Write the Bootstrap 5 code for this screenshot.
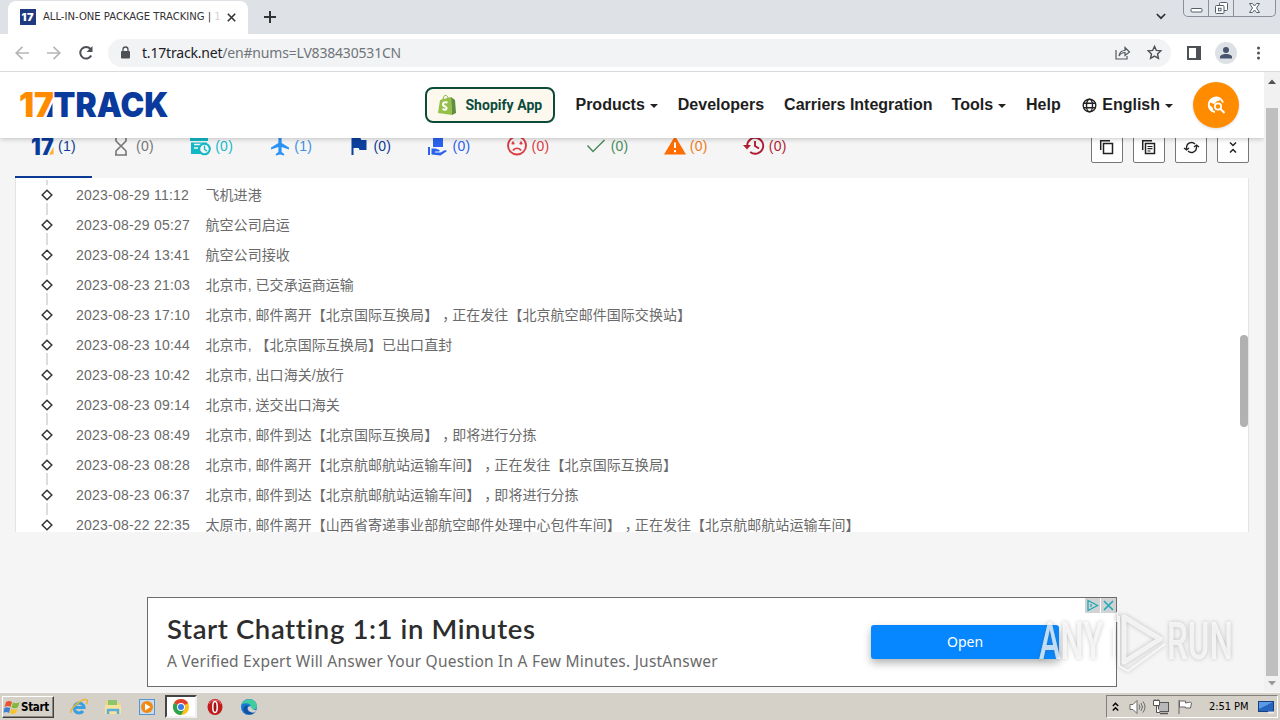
<!DOCTYPE html>
<html lang="en">
<head>
<meta charset="utf-8">
<title>ALL-IN-ONE PACKAGE TRACKING | 17TRACK</title>
<link href="https://cdn.jsdelivr.net/npm/bootstrap@5.3.0/dist/css/bootstrap.min.css" rel="stylesheet">
<style>
html,body{width:1280px;height:720px;overflow:hidden}
body{font-family:"Liberation Sans","Noto Sans CJK SC",sans-serif;font-size:14px;line-height:1;color:#222;background:#f5f5f5}
svg{display:block;flex:none;overflow:visible}
.tabstrip{height:34px;background:#dee1e6;padding-left:8px}
.browser-tab{width:240px;height:33px;margin-top:1px;background:#fff;border-radius:8px 8px 0 0;padding:0 11px 1px 12px}
.tab-title{font:11.2px "DejaVu Sans Condensed","DejaVu Sans",sans-serif;font-stretch:condensed;color:#333;width:180px;margin-left:7px;line-height:16px;letter-spacing:-.01px}
.tab-title i{font-style:normal;color:#d5d5d5}
.toolbar{height:38px;background:#fff;border-bottom:1px solid #d9dadc}
.omni{width:1063px;height:28px;border-radius:14px;background:#f1f3f4;margin-left:15px;padding:0 9px 0 12px}
.url{font:14px "Noto Sans",sans-serif;letter-spacing:-.19px;color:#70757a;line-height:20px}
.url b{font-weight:400;color:#202124}
.winctl{width:93px;height:17px;border:1px solid #8a8f99;border-top:0;border-radius:0 0 5px 5px;margin-right:4px;background:#e1e4ea}
.winctl>span{border-right:1px solid #8a8f99}
.viewer{height:620px}
.site{width:1264px;background:#f5f5f5;overflow:hidden}
.masthead{height:66px;background:#fff;padding:0 25px 0 19px;box-shadow:0 1px 5px rgba(0,0,0,.22);z-index:5}
.menu{font-size:16px;font-weight:700;gap:20px;color:#1e1e1e}
.menu .dd{gap:5px}
.dd::after{content:"";border:4px solid transparent;border-top-color:#222;border-bottom:0;margin-top:1px}
.shop{width:130px;height:36px;border:2px solid #0d4a3a;border-radius:8px;background:#fcf8ee;font:700 14px Roboto,sans-serif;color:#0b4b3c;padding-left:11px;gap:9px;letter-spacing:.03px}
.orb{width:46px;height:46px;border-radius:50%;background:#ff8c00;box-shadow:0 1px 3px rgba(0,0,0,.15)}
.statusbar{height:62px;margin-top:-22px;padding:0 15px}
.st{width:77px;height:62px;margin-right:2.1px;padding:0 0 1px 16px;gap:4px;border-bottom:2px solid transparent;letter-spacing:.25px}
.st.on{border-color:#0b3a94}
.tool{width:32px;height:32px;background:#fff;border:1px solid #777;border-radius:2px}
.events{height:354px;margin:0 15px;width:1234px;background:#fff;border:1px solid #e4e4e4;border-width:0 1px;padding:2px 0 0 26px;overflow:hidden}
.ev{height:30px;color:#6a6a6a;font-size:14px;flex:none}
.ev time{width:129.500px;margin-left:24px;letter-spacing:.22px}
.ev p{margin:0;white-space:nowrap;letter-spacing:.05px}
.comma{display:inline-block;width:14px;padding-left:4px;font-feature-settings:"halt"}
.node{width:10px;height:30px}
.inner-thumb{right:0;top:157px;width:8px;height:92px;border-radius:4px;background:#b1b1b1}
.advert{width:970px;height:90px;margin:65px 0 0 147px;border:1px solid #6c6c6c;background:#fff;padding:0 0 0 19px}
.advert h2{font:600 27.500px Lato,sans-serif;color:#2d2d2d;margin:0;line-height:34px;letter-spacing:.61px}
.advert p{font:15.5px "Noto Sans",sans-serif;color:#6a6a6a;margin:0;line-height:22px;white-space:nowrap;letter-spacing:.22px}
.open{width:188px;height:34px;background:#0787ff;border-radius:3px;color:#fff;font:14px "Noto Sans",sans-serif;box-shadow:0 4px 9px rgba(0,0,0,.3);right:57px;top:27px;padding-bottom:2px}
.adbtns{right:0;top:0;gap:1px}
.adbtns span{width:15px;height:15px;background:#d0d2d4}
.vbar{width:16px;background:#f1f1f1;padding:7px 0 6px}
.vbar i{width:12px;height:568px;background:#bfbfbf;margin-top:24px}
.taskbar{height:28px;background:#d5d0c8;border-top:1px solid #f8f8f6;padding:0 2px;font:11px "DejaVu Sans Condensed","DejaVu Sans",sans-serif;color:#000}
.startb{width:52px;height:22px;border:1px solid;border-color:#fff #404040 #404040 #fff;box-shadow:inset -1px -1px #8c8880;font:700 11.5px "DejaVu Sans Condensed","DejaVu Sans",sans-serif;letter-spacing:-.3px;padding-left:1px}
.quick{gap:16px;margin-left:16px}
.act{width:32px;height:23px;background:#fff;border:2px solid;border-color:#444 #f0f0f0 #f0f0f0 #444;margin:0 -7px}
.tray{width:172px;height:23px;border:1px solid;border-color:#85817a #fff #fff #85817a;padding:0 2px 0 5px}
.wm{left:1030px;top:600px;z-index:9;filter:drop-shadow(0 0 2px rgba(80,80,80,.45))}
</style>
</head>
<body class="d-flex flex-column position-relative">
<div class="tabstrip d-flex align-items-start">
 <div class="browser-tab d-flex align-items-center">
  <svg width="16" height="16"><rect width="16" height="16" fill="#1f3a80"/><text x="1.5" y="12" font-family="Inter" font-weight="900" font-size="11" textLength="12" fill="#fff">17</text></svg>
  <div class="tab-title text-nowrap">ALL-IN-ONE PACKAGE TRACKING | <i>1</i></div>
  <svg width="9" height="9" style="margin-left:4px" stroke="#333" stroke-width="1.6"><path d="M.8.8l7.4 7.4M8.200.8L.8 8.200"/></svg>
 </div>
 <svg width="12" height="12" class="mt-2" style="margin-left:16px;transform:translateY(3px)" stroke="#333" stroke-width="2"><path d="M6 0v12M0 6h12"/></svg>
 <svg width="10" height="7" class="ms-auto" style="margin:13px 17px 0 0" fill="none" stroke="#333" stroke-width="1.7"><path d="M.8 1l4.200 4.200L9.200 1"/></svg>
 <div class="winctl d-flex">
  <span class="d-flex justify-content-center" style="width:25px"><svg width="13" height="16"><rect x="1" y="8.500" width="11" height="3.500" rx="1" fill="#fff" stroke="#555e6c"/></svg></span>
  <span class="d-flex justify-content-center" style="width:25px"><svg width="13" height="16" fill="#fff" stroke="#555e6c"><rect x="4.500" y="2.500" width="8" height="8" rx="1"/><rect x=".5" y="5.500" width="8.500" height="8" rx="1"/><rect x="3.500" y="8.300" width="2.500" height="2.500"/></svg></span>
  <svg class="mx-auto" width="11" height="16" fill="#fff" stroke="#555e6c"><path d="M.5 3.500h3l2 2.500 2-2.500h3L7.500 8l3 4.500h-3l-2-2.500-2 2.500h-3L3.500 8z"/></svg>
 </div>
</div>
<div class="toolbar d-flex align-items-center">
 <svg width="14" height="14" style="margin-left:15px" fill="none" stroke="#b4b6b8" stroke-width="1.700"><path d="M14 7H1M7.500.8L1.200 7l6.300 6.200"/></svg>
 <svg width="14" height="14" style="margin-left:18px" fill="none" stroke="#b4b6b8" stroke-width="1.700"><path d="M0 7h13M6.500.8L12.800 7l-6.300 6.200"/></svg>
 <svg width="14" height="14" style="margin-left:18px" fill="none" stroke="#4d5156" stroke-width="2"><path d="M12.200 9.500A5.800 5.800 0 1 1 11.500 3"/><path d="M13.500 0v6h-6z" fill="#4d5156" stroke="none"/></svg>
 <div class="omni d-flex align-items-center">
  <svg width="11" height="13"><rect x="1" y="5" width="9" height="7.500" rx="1" fill="#4d5156"/><path d="M3 5.500V3.500a2.500 2.500 0 0 1 5 0v2" fill="none" stroke="#4d5156" stroke-width="1.300"/></svg>
  <div class="url" style="margin-left:11px"><b>t.17track.net</b>/en#nums=LV838430531CN</div>
  <svg class="ms-auto" width="15" height="14" fill="none" stroke="#555a60" stroke-width="1.200"><path d="M1 4v9h11v-3M4 10c.5-4 3-5.500 6-5.500V1.500L14.500 6 10 9.500v-3c-3 0-4.500 1-6 3.500z"/></svg>
  <svg style="margin-left:17px" width="15" height="15" viewBox="0 0 16 16" fill="none" stroke="#4d5156" stroke-width="1.500"><path d="M8 1.500l2 4.300 4.700.5-3.500 3.200 1 4.700L8 11.800l-4.200 2.400 1-4.700L1.300 6.300 6 5.800z"/></svg>
 </div>
 <svg style="margin-left:16px" width="14" height="14"><rect x="1" y="1" width="12" height="12" fill="none" stroke="#4d5156" stroke-width="2"/><path d="M9 1h4v12H9z" fill="#4d5156"/></svg>
 <svg style="margin-left:14px" width="22" height="22"><circle cx="11" cy="11" r="11" fill="#dde1e6"/><circle cx="11" cy="8" r="3" fill="#47536f"/><path d="M5 16.500v-1.500c0-4 12-4 12 0v1.500z" fill="#47536f"/></svg>
 <svg style="margin-left:20px" width="4" height="14" fill="#4d5156"><circle cx="1.500" cy="2" r="1.500"/><circle cx="1.500" cy="7" r="1.500"/><circle cx="1.500" cy="12" r="1.500"/></svg>
</div>
<main class="viewer d-flex">
 <div class="site">
  <header class="masthead d-flex align-items-center position-relative">
   <svg width="150" height="26" font-family="Inter" font-weight="900" font-size="33.500">
    <text x="0" y="25" fill="#ff8c00" textLength="35" lengthAdjust="spacingAndGlyphs">17</text>
    <text x="34.500" y="25" fill="#0a3b9c" textLength="115" lengthAdjust="spacingAndGlyphs">TRACK</text>
    <path d="M33.500 11v14h-6z" fill="#0a3b9c"/>
   </svg>
   <nav class="menu d-flex align-items-center ms-auto">
    <div class="shop d-flex align-items-center">
     <svg width="18" height="20"><path d="M2 5l11-3 1 18-14-2z" fill="#95bf47"/><path d="M13 2l4 3 1 13-4 2z" fill="#5e8e3e"/><path d="M5 5c0-6 5-6 5-1" fill="none" stroke="#7fae3b"/><path d="M9.500 7.500C4 6 4 10.500 7 11.500c3 1 1.500 4.500-2.500 2.500" fill="none" stroke="#fff" stroke-width="2"/></svg>
     <span>Shopify App</span>
    </div>
    <span class="dd d-flex align-items-center">Products</span>
    <span>Developers</span>
    <span style="margin-right:-1px">Carriers Integration</span>
    <span class="dd d-flex align-items-center">Tools</span>
    <span style="margin-right:1.500px">Help</span>
    <span class="dd d-flex align-items-center">
     <svg width="15" height="15" fill="none" stroke="#222" stroke-width="1.400"><circle cx="7.500" cy="7.500" r="6.300"/><ellipse cx="7.500" cy="7.500" rx="3" ry="6.300"/><path d="M1.500 5.200h12M1.500 9.800h12"/></svg>English</span>
    <div class="orb d-flex align-items-center justify-content-center">
     <svg width="20" height="20" fill="none" stroke="#fff"><path d="M17 7.500A7.300 7.300 0 1 0 9 17" stroke-width="1.900"/><path d="M9 2.500c5 .5 6 3 3.500 3.500C9.500 6 10 8 8 9L3 7C4 4 6 2.500 9 2.500zM2.500 9L7 13v4c-3-1-5-4-4.500-8z" fill="#fff" stroke="none"/><circle cx="12" cy="11.500" r="3.200" stroke-width="1.700"/><path d="M14.500 14l4 4" stroke-width="2"/></svg>
    </div>
   </nav>
  </header>
  <div class="statusbar d-flex align-items-center">
   <div class="st on d-flex align-items-center" style="color:#0b3a94"><svg width="23" height="20"><text y="18.500" font-family="Inter" font-weight="900" font-size="24" textLength="23" lengthAdjust="spacingAndGlyphs" fill="#0a3b9c">17</text><path d="M22.500 11v7.500h-4.500z" fill="#ffb02e"/></svg>(1)</div>
   <div class="st d-flex align-items-center" style="color:#777"><svg width="22" height="20" fill="none" stroke="#777" stroke-width="1.600"><path d="M5 1h12M5 19h12M6 1v4l5 5 5-5V1M6 19v-4l5-5 5 5v4"/></svg>(0)</div>
   <div class="st d-flex align-items-center" style="color:#18b9c9"><svg width="22" height="20"><path d="M1 1h18v4H1zM2 6.500h16v3c-5-1-8 4-6 8.500H2z" fill="#12b8c5"/><path d="M5 8.500h8M5 12h4" stroke="#f5f5f5" stroke-width="1.500"/><circle cx="15.500" cy="13" r="5.300" fill="#f5f5f5" stroke="#12b8c5" stroke-width="2"/><path d="M15.500 9.500v3.700l2.500 2" fill="none" stroke="#12b8c5" stroke-width="1.300"/></svg>(0)</div>
   <div class="st d-flex align-items-center" style="color:#3c91e6"><svg width="22" height="20" fill="#2c92f3"><path d="M12 0c1.200 0 1.600 1.500 1.600 3v4L21 11.500v2L13.600 11v5l2.600 2v1.500L12 18.500l-4.200 1V18l2.600-2v-5L3 13.500v-2L10.400 7V3C10.400 1.500 10.800 0 12 0z"/></svg>(1)</div>
   <div class="st d-flex align-items-center" style="color:#0b3a94"><svg width="22" height="20" fill="#0b3f9e"><path d="M4.500 2h9l.7 2h5.300v10h-7l-.7-2H6.500v7h-2z"/></svg>(0)</div>
   <div class="st d-flex align-items-center" style="color:#2b62ee"><svg width="22" height="20" fill="#2b62ee"><path d="M7 2h10v9H7zM2 11h2v8H2zM5.500 12.500h4l4 1.500v1.500H9v1h5.500l4.500-2.500 2 1-6.500 4.500-9-1z"/></svg>(0)</div>
   <div class="st d-flex align-items-center" style="color:#dd3a40"><svg width="22" height="20" fill="none" stroke="#dd3a40" stroke-width="1.900"><circle cx="11" cy="9.500" r="9"/><path d="M7 14.500c1.500-3 6.500-3 8 0M7 5.500v3M15 5.500v3M5.500 7.500h3M13.500 7.500h3" stroke-width="1.700"/></svg>(0)</div>
   <div class="st d-flex align-items-center" style="color:#4a8a5b"><svg width="22" height="20" fill="none" stroke="#4a8a5b" stroke-width="1.500"><path d="M2.500 9.500L8 15.500 19.500 4"/></svg>(0)</div>
   <div class="st d-flex align-items-center" style="color:#ef7b1a"><svg width="22" height="20"><path d="M11 0l11 18.500H0z" fill="#ff6d00"/><path d="M11 6.500v5.500M11 14v2.300" stroke="#fff" stroke-width="2"/></svg>(0)</div>
   <div class="st d-flex align-items-center" style="color:#b01c33"><svg width="22" height="20" fill="none" stroke="#b01c33" stroke-width="1.900"><path d="M4.200 9.500a8 8 0 1 1 3 6.500M12 5v5l4 2.500"/><path d="M0 9h8l-4 4.500z" fill="#b01c33" stroke="none"/></svg>(0)</div>
   <div class="d-flex ms-auto" style="gap:10px">
    <span class="tool d-flex align-items-center justify-content-center"><svg width="15" height="15" fill="none" stroke="#222" stroke-width="1.500" style="margin:-1px 0 0 -1px"><path d="M1.700 11V1.700H11"/><rect x="4.500" y="4.500" width="9" height="10"/></svg></span>
    <span class="tool d-flex align-items-center justify-content-center"><svg width="15" height="15" fill="none" stroke="#222" stroke-width="1.500" style="margin:-1px 0 0 -1px"><path d="M1.700 11V1.700H11"/><rect x="4.500" y="4.500" width="9" height="10"/><path d="M6.500 7.500h5M6.500 9.700h5M6.500 12h3" stroke-width="1.200"/></svg></span>
    <span class="tool d-flex align-items-center justify-content-center"><svg width="15" height="13" fill="none" stroke="#222" stroke-width="1.300"><path d="M2.500 8V6.500A5 5 0 0 1 11 3M12.500 5v1.500A5 5 0 0 1 4 10M0 7l2.500 2L5 7M10 6l2.500-2L15 6"/></svg></span>
    <span class="tool d-flex align-items-center justify-content-center"><svg width="10" height="13" fill="none" stroke="#222" stroke-width="1.500"><path d="M2 1.500l3 3 3-3M2 11.500l3-3 3 3"/></svg></span>
   </div>
  </div>
  <section class="events d-flex flex-column position-relative" id="events" lang="zh-CN">
   <div class="inner-thumb position-absolute"></div>
  </section>
  <aside class="advert position-relative d-flex flex-column">
   <h2 style="margin-top:14px">Start Chatting 1:1 in Minutes</h2>
   <p style="margin-top:4px">A Verified Expert Will Answer Your Question In A Few Minutes. JustAnswer</p>
   <div class="open position-absolute d-flex align-items-center justify-content-center">Open</div>
   <div class="adbtns position-absolute d-flex">
    <span><svg width="15" height="15" fill="none" stroke="#20aab4" stroke-width="1.300"><path d="M3 2.500v10l9.500-5zM6 6v3"/></svg></span>
    <span><svg width="15" height="15" stroke="#20aab4" stroke-width="1.600"><path d="M3 3l9 9M12 3l-9 9"/></svg></span>
   </div>
  </aside>
 </div>
 <div class="vbar d-flex flex-column align-items-center">
  <svg width="8" height="5" fill="#505050"><path d="M0 5l4-4.500L8 5z"/></svg>
  <i></i>
  <svg class="mt-auto" width="8" height="5" fill="#9a9a9a"><path d="M0 0h8L4 4.500z"/></svg>
 </div>
</main>
<footer class="taskbar d-flex align-items-center">
 <div class="startb d-flex align-items-center"><svg width="17" height="16"><path d="M2 3c2-1.500 4-1.500 6 0L6.500 8c-2-1.500-4-1-6 0z" fill="#e8552a"/><path d="M9 3.500c2 1 4 1 6.500-.5L14 8c-2 1.500-4.500 1.500-6.500.5z" fill="#7fb93c"/><path d="M.3 9c2-1 4-1 6 .3L5 14c-2-1.500-3.500-1-5.500-.2z" fill="#3f7fd0"/><path d="M7.200 9.700c2 1 4 1 6.300-.3L12 14c-2 1.300-4 1.300-6.200.3z" fill="#f6c22d"/></svg>Start</div>
 <div class="quick d-flex align-items-center">
  <svg width="18" height="18"><path d="M4 9.500h10A5 5 0 1 0 13 13" fill="none" stroke="#3aa0e2" stroke-width="3"/><path d="M1 15C-1 11 13-1 17 2c1 1 0 3-1 4" fill="none" stroke="#eab733" stroke-width="1.500"/></svg>
  <svg width="18" height="18"><path d="M2 3h5l1 2h8v11H2z" fill="#f2d778"/><path d="M4 2h9v5H4z" fill="#8cc56b"/><path d="M1 7h16v9H1z" fill="#f7e39b"/><path d="M4 16v-4h10v4" fill="none" stroke="#5baedb" stroke-width="2.500"/></svg>
  <svg width="18" height="18"><rect x="1.500" y="1.500" width="15" height="15" fill="#c7dcf0" stroke="#5795cf"/><circle cx="9" cy="9" r="6" fill="#f28a12"/><path d="M7 5.500v7l5.500-3.500z" fill="#fff"/></svg>
  <div class="act d-flex align-items-center justify-content-center"><svg width="16" height="16"><circle cx="8" cy="8" r="8" fill="#fbc116"/><path d="M8 8L1.070 4A8 8 0 0 1 14.930 4z" fill="#df4130"/><path d="M1.070 4A8 8 0 0 0 8 16l3.500-6L8 8z" fill="#2da34f"/><path d="M8 4h6.930L8 8z" fill="#df4130"/><circle cx="8" cy="8" r="4" fill="#fff"/><circle cx="8" cy="8" r="3" fill="#3c7ce6"/></svg></div>
  <svg width="18" height="18"><ellipse cx="9" cy="9" rx="7.500" ry="8" fill="#c11b1e"/><path d="M3 6c2-5 10-5 12 0" stroke="#e77" fill="none"/><ellipse cx="9" cy="9" rx="2.200" ry="5.500" fill="#a01215" stroke="#fff" stroke-width="1.500"/></svg>
  <svg width="18" height="18"><circle cx="9" cy="9" r="8" fill="#1479d1"/><path d="M2 6C4 0 16-1 17 8c0 4-5 4-6 2 1-4-4-6-9-4z" fill="#43cba0"/><path d="M7 10c0 4 4 5.500 8.500 4C10 19 1 15 4 9c1-1.500 3-2 4.500-1z" fill="#1450a0"/><path d="M10.500 8c1 3 2.500 4 6 4l-2 2.500C10 15 7 12 8 9z" fill="#d5d0c8"/></svg>
 </div>
 <div class="tray ms-auto d-flex align-items-center">
  <svg width="7" height="10" fill="none" stroke="#000" stroke-width="1.400"><path d="M.8 4l2.700-2.700L6.200 4M.8 8.500l2.700-2.700 2.700 2.700"/></svg>
  <svg style="margin-left:10px" width="17" height="16" fill="none" stroke="#6b6b6b"><path d="M1 5.500h3l4-4v13l-4-4H1z" fill="#fff"/><path d="M10 5.500q2 2.500 0 5M12 4q3 4 0 8M14 2.500q4 5.500 0 11"/></svg>
  <svg style="margin-left:7px" width="17" height="16" stroke="#555"><rect x="5.500" y="3.500" width="10" height="9" fill="#b8b8b8"/><path d="M7 14.500h8" stroke-width="1.500"/><path d="M.5 1.500h6v5h-6zM3.500 6.500v7H7M2 0v2M5 0v2" fill="#fff"/></svg>
  <svg style="margin-left:7px" width="17" height="16" fill="#fff" stroke="#666"><path d="M2 1v14M2.500 2h6v2l5-1 1 1-1 5H8.500V8h-6z"/></svg>
  <span class="text-nowrap" style="margin-left:15px;letter-spacing:-.05px">2:51 PM</span>
  <svg class="ms-auto" width="17" height="14"><rect x=".5" y="1.500" width="15" height="10" fill="#2565bd" stroke="#173f86"/><path d="M1 2h14L1 9z" fill="#5a9be4"/><path d="M10 12.500h6" stroke="#eee" stroke-width="2"/></svg>
 </div>
</footer>
<svg class="wm position-absolute" width="210" height="80" font-family="Roboto" font-size="52" font-weight="500">
 <g fill="#fff" fill-opacity=".74"><text x="9" y="59" textLength="64" lengthAdjust="spacingAndGlyphs">ANY</text><text x="137" y="59" textLength="66" lengthAdjust="spacingAndGlyphs">RUN</text></g>
 <g fill="none" stroke="#fff" stroke-opacity=".75" stroke-linejoin="round"><path d="M94 17l36 22-36 23z" stroke-width="5"/><path d="M87 12v10M84 28v30M89 16v50l9 5 37-27" stroke-width="2"/></g>
</svg>
<script src="https://cdn.jsdelivr.net/npm/bootstrap@5.3.0/dist/js/bootstrap.bundle.min.js"></script>
<script>
const events=[
["2023-08-29 11:12","飞机进港"],
["2023-08-29 05:27","航空公司启运"],
["2023-08-24 13:41","航空公司接收"],
["2023-08-23 21:03","北京市, 已交承运商运输"],
["2023-08-23 17:10","北京市, 邮件离开【北京国际互换局】，正在发往【北京航空邮件国际交换站】"],
["2023-08-23 10:44","北京市, 【北京国际互换局】已出口直封"],
["2023-08-23 10:42","北京市, 出口海关/放行"],
["2023-08-23 09:14","北京市, 送交出口海关"],
["2023-08-23 08:49","北京市, 邮件到达【北京国际互换局】，即将进行分拣"],
["2023-08-23 08:28","北京市, 邮件离开【北京航邮航站运输车间】，正在发往【北京国际互换局】"],
["2023-08-23 06:37","北京市, 邮件到达【北京航邮航站运输车间】，即将进行分拣"],
["2023-08-22 22:35","太原市, 邮件离开【山西省寄递事业部航空邮件处理中心包件车间】，正在发往【北京航邮航站运输车间】"]];
document.getElementById("events").insertAdjacentHTML("beforeend",events.map(([t,d])=>`<div class="ev d-flex align-items-center"><svg class="node" fill="none"><path d="M5 0v5M5 23v7" stroke="#ddd" stroke-width="2"/><path d="M5 10.200L9.800 15 5 19.800 .2 15z" stroke="#333" stroke-width="1.500"/></svg><time>${t}</time><p>${d.replace("，",'<span class="comma">，</span>')}</p></div>`).join(""));
</script>
</body>
</html>
